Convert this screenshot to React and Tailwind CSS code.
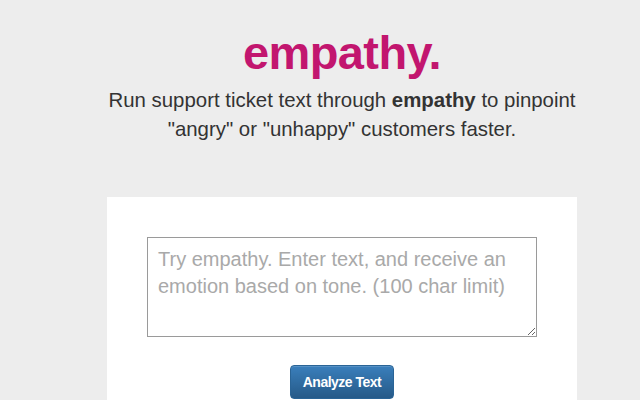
export default function App() {
  return (
    <div className="h-[400px] overflow-hidden bg-[#ededed] pl-[44px] font-['Liberation_Sans',Arial,sans-serif] text-[#333]">
      <div className="flex flex-col items-center pt-[24px]">
        <h1 className="text-[47px] font-bold leading-[58px] tracking-[-0.6px] text-[#c2166f]">empathy.</h1>
        <p className="mt-[4px] text-center text-[20.4px] leading-[29px] text-[#333]">
          Run support ticket text through <b>empathy</b> to pinpoint
          <br />
          "angry" or "unhappy" customers faster.
        </p>
        <div className="mt-[53px] flex w-[470px] flex-col items-center bg-white pt-[40px] pb-[40px]">
          <textarea
            className="h-[100px] w-[390px] resize border border-[#9a9a9a] bg-white px-[10px] py-[8px] text-[20px] leading-[27px] text-[#333] outline-none placeholder:text-[#a9a9a9]"
            placeholder="Try empathy. Enter text, and receive an emotion based on tone. (100 char limit)"
          />
          <button className="mt-[28px] h-[34px] rounded-[4px] border border-[#2a6496] bg-gradient-to-b from-[#3a7fbc] to-[#265a88] px-[12px] text-[14px] font-bold leading-[20px] tracking-[-0.5px] text-white shadow-[inset_0_1px_0_rgba(255,255,255,0.15)]">
            Analyze Text
          </button>
        </div>
      </div>
    </div>
  );
}
